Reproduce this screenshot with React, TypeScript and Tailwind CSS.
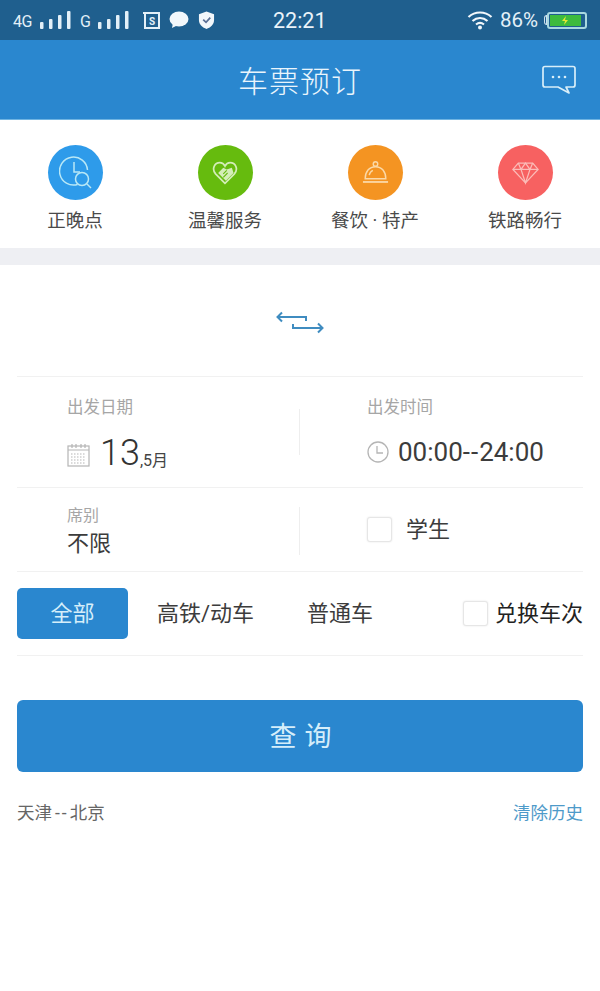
import React from 'react';

const cjk = { fontFamily: 'Roboto, "Noto Sans CJK SC", sans-serif' };

function Signal() {
  return (
    <svg width="31" height="19" viewBox="0 0 31 19">
      <g fill="#e3f0f8">
        <rect x="0" y="11" width="3.5" height="7" rx="1" />
        <rect x="9" y="8" width="3.5" height="10" rx="1" />
        <rect x="18" y="4" width="3.5" height="14" rx="1" />
        <rect x="27" y="0" width="3.5" height="18" rx="1" />
      </g>
    </svg>
  );
}

function StatusBar() {
  return (
    <div className="h-10 bg-[#1f5f8e] flex items-center text-[#e3f0f8]">
      <div className="flex items-center pl-[13px] w-[273px]">
        <span className="text-[16px] w-[27px] mt-[3px] tracking-[-0.5px]">4G</span>
        <Signal />
        <span className="text-[16px] w-[18px] mt-[3px] ml-[9px]">G</span>
        <Signal />
        {/* sim / message / shield notification icons */}
        <svg width="18" height="19" viewBox="0 0 18 19" className="ml-[14px]">
          <rect x="2" y="2" width="14" height="15" fill="none" stroke="#e3f0f8" strokeWidth="2" />
          <rect x="0" y="1" width="6" height="2" fill="#e3f0f8" />
          <text x="9" y="14" textAnchor="middle" fontSize="10" fontWeight="700" fill="#e3f0f8" fontFamily="Roboto">S</text>
        </svg>
        <svg width="20" height="18" viewBox="0 0 20 18" className="ml-[8px]">
          <ellipse cx="10" cy="8" rx="9.5" ry="7.5" fill="#f2f7fb" />
          <path d="M4 12 L3 17 L9 14 Z" fill="#f2f7fb" />
        </svg>
        <svg width="17" height="20" viewBox="0 0 18 20" className="ml-[9px]">
          <path d="M9 1 L17 4 V10 C17 15 13 18 9 19.5 C5 18 1 15 1 10 V4 Z" fill="#f2f7fb" />
          <path d="M5.5 9.5 L8.5 12.5 L13 7.5" fill="none" stroke="#5a6f95" strokeWidth="1.8" />
        </svg>
      </div>
      <span className="text-[21.5px] leading-[24px] mt-[2px] text-[#eaf3f9]">22:21</span>
      <div className="ml-auto flex items-center pr-[13px]">
        <svg width="26" height="20" viewBox="0 0 26 20">
          <g fill="none" stroke="#f2f7fb" strokeWidth="2.2">
            <path d="M1.5 7 C8 1 18 1 24.5 7" />
            <path d="M5.5 11 C10 7 16 7 20.5 11" />
            <path d="M9 14.5 C11.5 12.5 14.5 12.5 17 14.5" />
          </g>
          <circle cx="13" cy="17.5" r="2" fill="#f2f7fb" />
        </svg>
        <span className="text-[20.5px] ml-[7px] mt-[1px] text-[#e3f0f8]">86%</span>
        <div className="w-[3px] h-[10px] rounded-l-sm border border-[#cfe2ee] ml-[6px]" />
        <div className="w-[40px] h-[17px] rounded-[3px] border-2 border-[#a8d8e0] bg-[#1f5f8e] p-[1px]">
          <div className="w-[90%] h-full bg-[#3dbb3d] flex items-center justify-center">
            <svg width="8" height="9" viewBox="0 0 8 9">
              <path d="M5 0 L1 5 H4 L3 9 L7 4 H4 Z" fill="#e6e832" />
            </svg>
          </div>
        </div>
      </div>
    </div>
  );
}

function Header() {
  return (
    <div className="h-20 bg-[#2a87cf] grid grid-cols-[1fr_auto_1fr] items-center border-b border-[#6fb4e2]">
      <span className="col-start-2 pt-[3px] text-[30px] text-[#eaf5fc] font-light tracking-[1px]">车票预订</span>
      <svg width="34" height="30" viewBox="0 0 34 30" className="justify-self-end mr-[24px] mt-[1px]">
        <path d="M3 1.5 H31 Q33 1.5 33 3.5 V20 Q33 22 31 22 H24 L27 28 L16 22 H3 Q1 22 1 20 V3.5 Q1 1.5 3 1.5 Z" fill="none" stroke="#d8eef9" strokeWidth="1.7" strokeLinejoin="round" />
        <circle cx="11" cy="12" r="1.3" fill="#d8eef9" />
        <circle cx="17" cy="12" r="1.3" fill="#d8eef9" />
        <circle cx="23" cy="12" r="1.3" fill="#d8eef9" />
      </svg>
    </div>
  );
}

function ShortcutItem({ label, bg, icon }: { label: string; bg: string; icon: React.ReactNode }) {
  return (
    <div className="flex flex-col items-center pt-[25px]">
      <div className={`w-[55px] h-[55px] rounded-full flex items-center justify-center ${bg}`}>{icon}</div>
      <span className="text-[18.5px] leading-[24px] mt-[9px] text-[#4a4a4a] whitespace-nowrap">{label}</span>
    </div>
  );
}

function Shortcuts() {
  return (
    <div className="h-[128px] grid grid-cols-4 bg-white">
      <ShortcutItem
        label="正晚点"
        bg="bg-[#2e9bea]"
        icon={
          <svg width="33" height="33" viewBox="0 0 33 33" fill="none" stroke="#b9e8f6" strokeWidth="1.5">
            <path d="M18.5 28.5 A14 14 0 1 1 28.5 14" />
            <path d="M15 6 V16 H21" />
            <circle cx="23" cy="23" r="6.5" />
            <path d="M28 28 L32 32" />
          </svg>
        }
      />
      <ShortcutItem
        label="温馨服务"
        bg="bg-[#66bb0e]"
        icon={
          <svg width="26" height="24" viewBox="0 0 30 28">
            <path d="M15 26 L4 15 C-1 9 3 2 9 2 C12 2 14 4 15 6 C16 4 18 2 21 2 C27 2 31 9 26 15 Z" fill="none" stroke="#d4edb8" strokeWidth="2" />
            <path d="M7 14 L13 8 L17 10 L23 8 L25 14 L16 23 Z" fill="#d4edb8" />
            <path d="M13 15 L17 11 M13 19 L18 14" stroke="#66bb0e" strokeWidth="1.3" />
          </svg>
        }
      />
      <ShortcutItem
        label="餐饮 · 特产"
        bg="bg-[#f49422]"
        icon={
          <svg width="27" height="26" viewBox="0 0 30 29" fill="none" stroke="#fbd9a8" strokeWidth="1.6">
            <circle cx="15" cy="4.5" r="2.5" />
            <path d="M3.5 21 C3.5 13 8 7.5 15 7.5 C22 7.5 26.5 13 26.5 21 Z" />
            <path d="M8 17 C8.5 14 10 12.5 12 11.5" />
            <path d="M1 24.5 H29" strokeWidth="2" />
          </svg>
        }
      />
      <ShortcutItem
        label="铁路畅行"
        bg="bg-[#f76161]"
        icon={
          <svg width="27" height="24" viewBox="0 0 30 26" fill="none" stroke="#fbbcb8" strokeWidth="1.4">
            <path d="M7 2 H23 L29 9 L15 24 L1 9 Z" />
            <path d="M1 9 H29 M10 9 L15 24 L20 9 M7 2 L10 9 L15 2 L20 9 L23 2" />
          </svg>
        }
      />
    </div>
  );
}

function Checkbox() {
  return <div className="w-[25px] h-[25px] rounded-[3px] border border-[#e6e6e6] bg-white shadow-[0_0_2px_#e4e4e4]" />;
}

function SwapRow() {
  return (
    <div className="h-[112px] flex items-start justify-center pt-[45px] border-b border-[#f1f1f1]">
      <svg width="48" height="24" viewBox="0 0 48 24" fill="none" stroke="#3f8cc0" strokeWidth="2" className="mr-[1px]">
        <path d="M2 7 H30 V11 M6 2.5 L1.5 7 L6 11.5" />
        <path d="M17 14 V18 H46 M42 13.5 L46.5 18 L42 22.5" />
      </svg>
    </div>
  );
}

function DateTimeRow() {
  return (
    <div className="h-[111px] flex border-b border-[#f1f1f1]">
      <div className="w-[282px] pl-[50px] pt-[21px]">
        <div className="text-[16.5px] leading-[20px] text-[#a6a6a6]">出发日期</div>
        <div className="flex items-end mt-[16px]">
          <svg width="23" height="24" viewBox="0 0 23 24" fill="none" stroke="#b5b5b5" strokeWidth="1.2" className="mb-[5px]">
            <rect x="1" y="3" width="21" height="20" />
            <path d="M1 7 H22 M5 1 V5 M9 1 V5 M14 1 V5 M18 1 V5" />
            <path d="M4 11 H19 M4 14 H19 M4 17 H19 M4 20 H19" strokeDasharray="1.5 1.5" />
          </svg>
          <span className="text-[36px] leading-[38px] ml-[10px] text-[#333] font-light">13</span>
          <span className="text-[16px] leading-[20px] mb-[1px] text-[#444]">,5月</span>
        </div>
      </div>
      <div className="w-px h-[46px] bg-[#eeeeee] mt-[32px]" />
      <div className="pl-[67px] pt-[21px]">
        <div className="text-[16.5px] leading-[20px] text-[#a6a6a6]">出发时间</div>
        <div className="flex items-center mt-[19px]">
          <svg width="22" height="22" viewBox="0 0 22 22" fill="none" stroke="#b5b5b5" strokeWidth="1.3">
            <circle cx="11" cy="11" r="10" />
            <path d="M10 5 V12 H16" />
          </svg>
          <span className="text-[26px] leading-[30px] ml-[9px] text-[#3c3c3c] whitespace-nowrap">
            00:00<span className="tracking-[1px]">--</span>24:00
          </span>
        </div>
      </div>
    </div>
  );
}

function SeatRow() {
  return (
    <div className="h-[84px] flex border-b border-[#f1f1f1]">
      <div className="w-[282px] pl-[50px] pt-[18px]">
        <div className="text-[16px] leading-[20px] text-[#a6a6a6]">席别</div>
        <div className="text-[22px] leading-[30px] mt-[3px] text-[#3c3c3c]">不限</div>
      </div>
      <div className="w-px h-[48px] bg-[#eeeeee] mt-[19px]" />
      <div className="pl-[67px] flex items-center gap-[14px] pb-[1px]">
        <Checkbox />
        <span className="text-[22px] text-[#3c3c3c]">学生</span>
      </div>
    </div>
  );
}

function TrainTabs() {
  return (
    <div className="h-[84px] flex items-center border-b border-[#f1f1f1]">
      <div className="w-[111px] h-[51px] rounded-[5px] bg-[#2a87cf] flex items-center justify-center text-[22px] text-[#d5eefa]">全部</div>
      <span className="text-[22px] ml-[29px] text-[#3c3c3c]">高铁/动车</span>
      <span className="text-[22px] ml-[53px] text-[#3c3c3c]">普通车</span>
      <div className="ml-auto flex items-center gap-[7px]">
        <Checkbox />
        <span className="text-[22px] text-[#222] whitespace-nowrap">兑换车次</span>
      </div>
    </div>
  );
}

export default function App() {
  return (
    <div className="w-[600px] h-[991px] bg-white overflow-hidden" style={cjk}>
      <StatusBar />
      <Header />
      <Shortcuts />
      <div className="h-[17px] bg-[#eeeff3]" />
      <div className="px-[17px]">
        <SwapRow />
        <DateTimeRow />
        <SeatRow />
        <TrainTabs />
        <button className="block w-full h-[72px] mt-[44px] pt-[2px] pl-[9px] rounded-[6px] bg-[#2a87cf] text-[#d5eefa] text-[27px] tracking-[8px]">查询</button>
        <div className="mt-[29px] flex justify-between text-[17.5px] leading-[24px]">
          <span className="text-[#666]">
            天津<span className="tracking-[2px] ml-[3px] mr-[1px]">--</span>北京
          </span>
          <span className="text-[#4e9ac9]">清除历史</span>
        </div>
      </div>
    </div>
  );
}
